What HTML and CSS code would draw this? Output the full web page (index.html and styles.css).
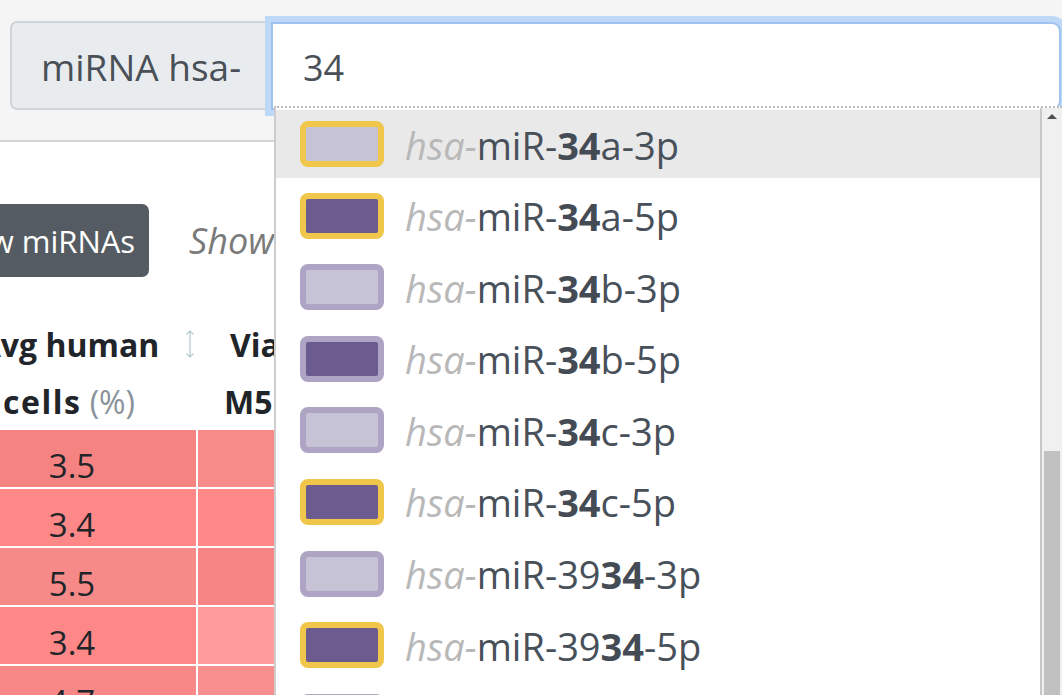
FILE: index.html
```html
<!DOCTYPE html>
<html lang="en">
<head>
<meta charset="utf-8">
<title>miRNA search</title>
<link rel="stylesheet" href="styles.css">
</head>
<body>
<div class="page">
  <header class="topbar">
    <div class="input-group">
      <span class="prepend">miRNA hsa-</span>
      <div class="search">34</div>
    </div>
  </header>

  <main class="content">
    <div class="toolbar">
      <button class="btn">Show miRNAs</button>
      <span class="hint">Showing all</span>
    </div>
    <table class="grid">
      <colgroup><col class="col1"><col class="col2"></colgroup>
      <thead>
        <tr>
          <th class="h1"><span class="htext">Avg human<br><span class="l2">cells</span> <span class="unit">(%)</span></span>
            <svg class="sort" viewBox="0 0 10 28" width="10" height="28"><path d="M5 1V27M1.5 4.5L5 1L8.5 4.5M1.5 23.5L5 27L8.5 23.5" fill="none" stroke="#b9cdd1" stroke-width="1.3"/></svg>
          </th>
          <th class="h2"><span class="l1">Via</span><br><span class="l2">M5</span></th>
        </tr>
      </thead>
      <tbody>
        <tr><td class="v" style="background:#f58382">3.5</td><td style="background:#f68b89"></td></tr>
        <tr><td class="v" style="background:#fe8787">3.4</td><td style="background:#ff8888"></td></tr>
        <tr><td class="v" style="background:#f68a88">5.5</td><td style="background:#f78585"></td></tr>
        <tr><td class="v" style="background:#fe8888">3.4</td><td style="background:#ff9b9b"></td></tr>
        <tr><td class="v" style="background:#f78887">4.7</td><td style="background:#f68f8e"></td></tr>
      </tbody>
    </table>
  </main>

  <div class="dropdown">
    <ul class="list">
      <li class="item active"><span class="sw gold light"></span><span class="name"><i class="pre">hsa-</i>miR-<b>34</b>a-3p</span></li>
      <li class="item"><span class="sw gold dark"></span><span class="name"><i class="pre">hsa-</i>miR-<b>34</b>a-5p</span></li>
      <li class="item"><span class="sw lilac light"></span><span class="name"><i class="pre">hsa-</i>miR-<b>34</b>b-3p</span></li>
      <li class="item"><span class="sw lilac dark"></span><span class="name"><i class="pre">hsa-</i>miR-<b>34</b>b-5p</span></li>
      <li class="item"><span class="sw lilac light"></span><span class="name"><i class="pre">hsa-</i>miR-<b>34</b>c-3p</span></li>
      <li class="item"><span class="sw gold dark"></span><span class="name"><i class="pre">hsa-</i>miR-<b>34</b>c-5p</span></li>
      <li class="item"><span class="sw lilac light"></span><span class="name"><i class="pre">hsa-</i>miR-39<b>34</b>-3p</span></li>
      <li class="item"><span class="sw gold dark"></span><span class="name"><i class="pre">hsa-</i>miR-39<b>34</b>-5p</span></li>
      <li class="item"><span class="sw lilac light"></span><span class="name"><i class="pre">hsa-</i>miR-45<b>34</b></span></li>
    </ul>
    <div class="scrollbar">
      <span class="arrow"></span>
      <span class="thumb"></span>
    </div>
  </div>
</div>
</body>
</html>
```

FILE: styles.css
```css
html, body {
  margin: 0;
  padding: 0;
}
body {
  font-family: "Open Sans", "Noto Sans", "DejaVu Sans", sans-serif;
  background: #fff;
  color: #212529;
  overflow: hidden;
}
.page {
  position: relative;
  width: 1062px;
  height: 695px;
  overflow: hidden;
}

/* ---------- top bar ---------- */
.topbar {
  box-sizing: border-box;
  height: 142px;
  background: #f5f5f5;
  border-bottom: 2px solid #d6d6d6;
  padding: 21px 1px 0 10px;
}
.input-group {
  display: flex;
  height: 89px;
}
.prepend {
  box-sizing: border-box;
  width: 262px;
  height: 89px;
  display: flex;
  align-items: center;
  padding: 2px 0 0 29px;
  background: #e9ecef;
  border: 2px solid #ced4da;
  border-radius: 7px 0 0 7px;
  color: #495057;
  font-size: 37px;
  white-space: nowrap;
}
.search {
  position: relative;
  z-index: 1;
  flex: 1;
  box-sizing: border-box;
  height: 88px;
  margin: 1px 0 0 -1px;
  display: flex;
  align-items: center;
  padding: 2px 0 0 30px;
  background: #fff;
  border: 2px solid #9fc3ee;
  border-radius: 0 9px 9px 0;
  box-shadow: 0 0 0 6px #bed9f8;
  color: #495057;
  font-size: 36px;
}

/* ---------- content ---------- */
.content {
  padding-top: 62px;
}
.toolbar {
  display: flex;
  align-items: center;
  gap: 40px;
  height: 73px;
  margin-left: -79px;
}
.btn {
  height: 73px;
  padding: 0 14px;
  border: none;
  border-radius: 7px;
  background: #555b62;
  color: #fff;
  font-family: inherit;
  font-size: 31px;
  white-space: nowrap;
}
.hint {
  font-style: italic;
  color: #7a7a7a;
  font-size: 36px;
  white-space: nowrap;
}

.grid {
  margin: 39px 0 0 -52px;
  border-collapse: separate;
  border-spacing: 0;
  table-layout: fixed;
  width: 560px;
}
.col1 { width: 250px; }
.col2 { width: 310px; }
.grid th {
  position: relative;
  padding: 0;
  font-size: 32px;
  font-weight: 700;
  line-height: 57px;
  color: #212529;
  text-align: center;
  vertical-align: top;
}
.htext {
  position: relative;
  left: -4px;
}
.htext .l2 {
  letter-spacing: 1.5px;
}
.grid th.h2 {
  text-align: left;
  padding-left: 26px;
}
.h2 .l1 {
  margin-left: 6px;
}
.unit {
  font-weight: 400;
  color: #8a939b;
}
.sort {
  position: absolute;
  left: 237px;
  top: 14px;
}
.grid td {
  height: 43px;
  padding: 14px 0 0;
  line-height: 43px;
  border-right: 2px solid #fff;
  border-bottom: 2px solid #fff;
  font-size: 33px;
  text-align: center;
  color: #212529;
}

/* ---------- dropdown ---------- */
.dropdown {
  position: absolute;
  z-index: 2;
  left: 274px;
  top: 106px;
  right: 0;
  bottom: 0;
  display: flex;
  background: #fff;
  border-left: 2px solid #cdcdcd;
  border-top: 2px dotted #bdbdbd;
}
.list {
  flex: 1;
  margin: 0;
  padding: 2px 0 0;
  list-style: none;
  border-right: 2px solid #c8c8c8;
  overflow: hidden;
}
.item {
  display: flex;
  align-items: center;
  gap: 21px;
  height: 68px;
  margin-bottom: 3.6px;
  padding-left: 24px;
}
.item.active {
  background: #e9e9e9;
}
.sw {
  box-sizing: border-box;
  flex: none;
  width: 84px;
  height: 46px;
  border: 6px solid;
  border-radius: 8px;
}
.sw.gold { border-color: #f0c64b; }
.sw.lilac { border-color: #aea4c4; }
.sw.light { background: #c7c3d6; }
.sw.dark { background: #6c5b8f; }
.name {
  font-size: 38px;
  line-height: 42px;
  padding-top: 1px;
  color: #48505a;
  white-space: nowrap;
}
.name .pre {
  color: #b8b8b8;
  font-style: italic;
}
.name b {
  font-weight: 700;
  color: #454b54;
}

.scrollbar {
  flex: none;
  width: 20px;
  display: flex;
  flex-direction: column;
  align-items: center;
  justify-content: space-between;
  background: #f0f0f0;
}
.arrow {
  margin-top: 6px;
  width: 0;
  height: 0;
  border-left: 5px solid transparent;
  border-right: 5px solid transparent;
  border-bottom: 5px solid #505050;
}
.thumb {
  width: 16px;
  height: 244px;
  background: #c1c1c1;
}
```
